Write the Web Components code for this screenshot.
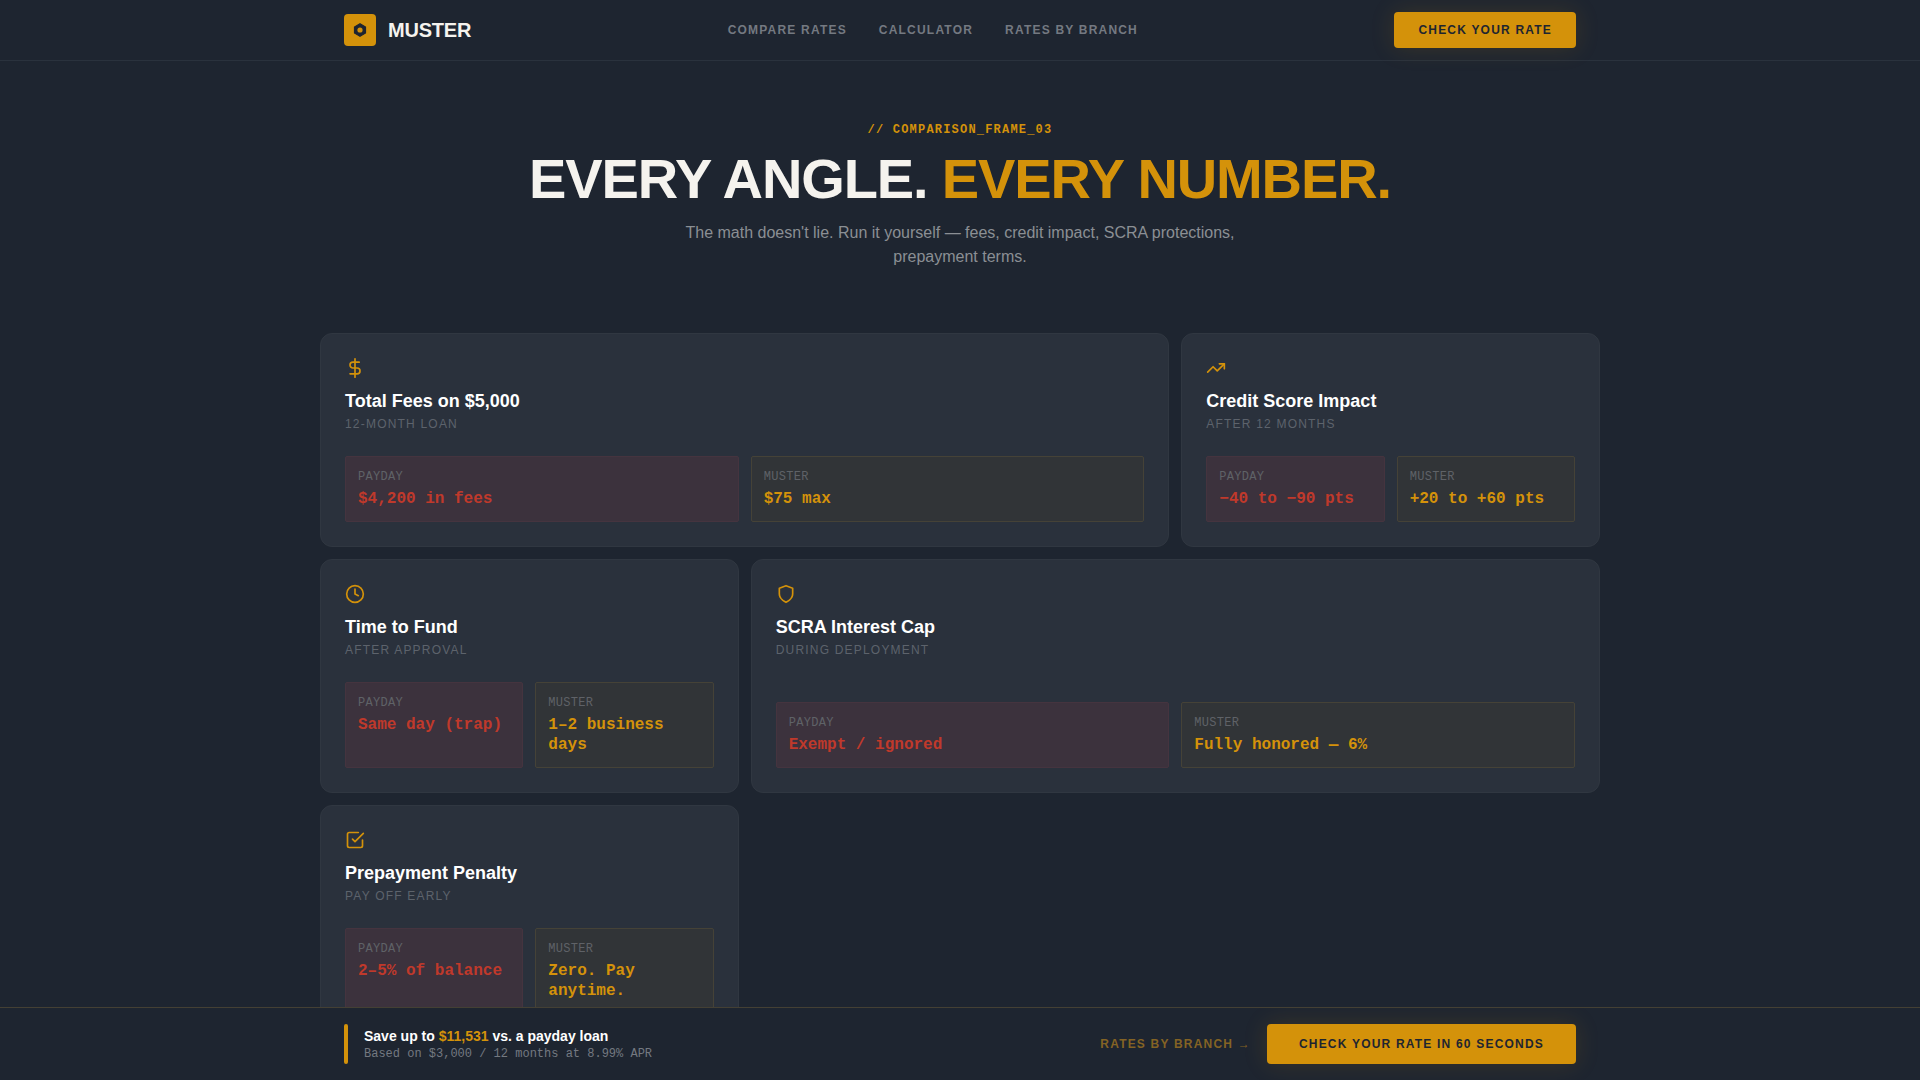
<!DOCTYPE html>
<html lang="en">
<head>
<meta charset="utf-8">
<meta name="viewport" content="width=device-width, initial-scale=1">
<title>Muster — Compare rates</title>
<style>
  :root {
    --bg: #1e2530;
    --card: #2a313c;
    --gold: #d4920a;
    --cream: #f5f3ee;
    --red: #c0392b;
    --sans: "Liberation Sans", Arial, sans-serif;
    --mono: "Liberation Mono", "Courier New", monospace;
  }
  * { box-sizing: border-box; }
  body { margin: 0; background: var(--bg); color: #fff; font-family: var(--sans); }
</style>
</head>
<body>
<muster-page></muster-page>

<script>
class BaseElement extends HTMLElement {
  constructor() {
    super();
    this.attachShadow({ mode: "open" });
  }
  connectedCallback() {
    this.shadowRoot.innerHTML = `<style>*{box-sizing:border-box}</style>` + this.render();
  }
}

customElements.define("muster-icon", class extends BaseElement {
  render() {
    const shapes = {
      dollar: `<line x1="12" y1="1" x2="12" y2="23"/><path d="M17 5H9.5a3.5 3.5 0 0 0 0 7h5a3.5 3.5 0 0 1 0 7H6"/>`,
      trend: `<polyline points="22 7 13.5 15.5 8.5 10.5 2 17"/><polyline points="16 7 22 7 22 13"/>`,
      clock: `<circle cx="12" cy="12" r="10"/><polyline points="12 6 12 12 16 14"/>`,
      shield: `<path d="M12 22s8-4 8-10V5l-8-3-8 3v7c0 6 8 10 8 10z"/>`,
      check: `<polyline points="9 11 12 14 22 4"/><path d="M21 12v7a2 2 0 0 1-2 2H5a2 2 0 0 1-2-2V5a2 2 0 0 1 2-2h11"/>`
    };
    return `<style>
      :host { display: block; width: 20px; height: 20px; color: var(--gold); }
      svg { display: block; width: 100%; height: 100%; }
    </style>
    <svg viewBox="0 0 24 24" fill="none" stroke="currentColor" stroke-width="2" stroke-linecap="round" stroke-linejoin="round" aria-hidden="true">${shapes[this.getAttribute("name")]}</svg>`;
  }
});

customElements.define("muster-button", class extends BaseElement {
  render() {
    return `<style>
      :host { display: block; }
      button {
        display: block; height: 36px; padding: 0 24px; border: 0; border-radius: 4px;
        background: var(--gold); color: var(--bg); cursor: pointer; white-space: nowrap;
        font: 700 12px/16px var(--sans); letter-spacing: 0.1em; text-transform: uppercase;
        box-shadow: 0 0 24px rgba(212, 146, 10, 0.15);
      }
      :host([size="large"]) button { height: 40px; padding: 0 32px; }
    </style>
    <button type="button"><slot></slot></button>`;
  }
});

customElements.define("muster-nav", class extends BaseElement {
  render() {
    return `<style>
      :host { display: block; border-bottom: 1px solid #2a323d; }
      header {
        display: flex; align-items: center; justify-content: space-between;
        max-width: 1280px; height: 60px; margin: 0 auto; padding: 0 24px;
      }
      .brand { display: flex; align-items: center; gap: 12px; color: var(--cream); text-decoration: none; font: 700 20px/28px var(--sans); letter-spacing: -0.01em; }
      .mark { display: flex; align-items: center; justify-content: center; width: 32px; height: 32px; border-radius: 4px; background: var(--gold); }
      .mark svg { display: block; width: 16px; height: 16px; }
      nav { display: flex; gap: 32px; }
      nav a { color: #747981; text-decoration: none; font: 700 12px/16px var(--sans); letter-spacing: 0.1em; text-transform: uppercase; }
    </style>
    <header>
      <a class="brand" href="#home"><span class="mark"><svg viewBox="0 0 16 16" aria-hidden="true"><path d="M8 1.7 13.5 4.9v6.2L8 14.3 2.5 11.1V4.9Z" fill="#1e2530" stroke="#1e2530" stroke-width="1.2" stroke-linejoin="round"/><circle cx="8" cy="8" r="2.6" fill="#d4920a"/></svg></span>MUSTER</a>
      <nav aria-label="Main"><a href="#compare">Compare Rates</a><a href="#calculator">Calculator</a><a href="#branch">Rates by Branch</a></nav>
      <muster-button>Check Your Rate</muster-button>
    </header>`;
  }
});

customElements.define("muster-hero", class extends BaseElement {
  render() {
    return `<style>
      :host { display: block; padding: 60px 24px 64px; text-align: center; }
      .eyebrow { margin: 0 0 10px; color: var(--gold); font: 700 12px/18px var(--mono); letter-spacing: 0.1em; text-transform: uppercase; }
      h1 { margin: 0 0 12px; color: var(--cream); font: 700 56px/60px var(--sans); letter-spacing: -0.02em; text-transform: uppercase; }
      em { color: var(--gold); font-style: normal; }
      .lead { max-width: 576px; margin: 0 auto; color: #8b8f94; font: 16px/24px var(--sans); }
    </style>
    <p class="eyebrow"><slot name="eyebrow"></slot></p>
    <h1>Every angle. <em>Every number.</em></h1>
    <p class="lead"><slot></slot></p>`;
  }
});

customElements.define("rate-value", class extends BaseElement {
  render() {
    return `<style>
      :host { display: block; min-width: 0; padding: 12px; border: 1px solid #45343f; border-radius: 2px; background: #3c323d; color: var(--red); }
      :host([kind="muster"]) { border-color: #454237; background: #313437; color: var(--gold); }
      dt { margin: 0 0 4px; color: #5f6267; font: 12px/16px var(--mono); letter-spacing: 0.025em; text-transform: uppercase; }
      dl, dd { margin: 0; }
      dd { font: 700 16px/20px var(--mono); }
    </style>
    <dl><dt>${this.getAttribute("kind")}</dt><dd><slot></slot></dd></dl>`;
  }
});

customElements.define("rate-card", class extends BaseElement {
  render() {
    return `<style>
      :host { display: flex; flex-direction: column; justify-content: space-between; gap: 24px; padding: 24px; border: 1px solid #303741; border-radius: 12px; background: var(--card); }
      :host([wide]) { grid-column: span 2; }
      h2 { margin: 12px 0 4px; color: #fff; font: 700 18px/22px var(--sans); }
      p { margin: 0; color: #5d636c; font: 12px/16px var(--sans); letter-spacing: 0.1em; text-transform: uppercase; }
      .values { display: grid; grid-template-columns: 1fr 1fr; gap: 12px; }
    </style>
    <div>
      <muster-icon name="${this.getAttribute("icon")}"></muster-icon>
      <h2>${this.getAttribute("heading")}</h2>
      <p>${this.getAttribute("note")}</p>
    </div>
    <div class="values"><slot></slot></div>`;
  }
});

customElements.define("rate-grid", class extends BaseElement {
  render() {
    return `<style>
      :host { display: grid; grid-template-columns: repeat(3, minmax(0, 1fr)); gap: 12px; max-width: 1280px; margin: 0 auto; padding-bottom: 128px; }
    </style><slot></slot>`;
  }
});

customElements.define("muster-bar", class extends BaseElement {
  render() {
    return `<style>
      :host { display: block; position: fixed; inset: auto 0 0 0; border-top: 1px solid #444034; background: var(--bg); overflow: hidden; }
      .inner { display: flex; align-items: center; justify-content: space-between; max-width: 1280px; margin: 0 auto; padding: 16px 24px; }
      .saving { display: flex; align-items: center; gap: 16px; }
      .rule { width: 4px; height: 40px; border-radius: 2px; background: var(--gold); }
      p { margin: 0; font: 700 14px/20px var(--sans); color: #fff; }
      p + p { font: 12px/16px var(--mono); color: #747981; }
      b { color: var(--gold); }
      .actions { display: flex; align-items: center; gap: 16px; }
      .actions a { color: #846324; text-decoration: none; font: 700 12px/16px var(--sans); letter-spacing: 0.1em; text-transform: uppercase; }
    </style>
    <div class="inner">
      <div class="saving"><span class="rule"></span><div>
        <p>Save up to <b>$11,531</b> vs. a payday loan</p>
        <p>Based on $3,000 / 12 months at 8.99% APR</p>
      </div></div>
      <div class="actions">
        <a href="#branch">Rates by Branch →</a>
        <muster-button size="large">Check Your Rate in 60 Seconds</muster-button>
      </div>
    </div>`;
  }
});

customElements.define("muster-page", class extends BaseElement {
  render() {
    return `<style>:host { display: block; }</style>
    <muster-nav></muster-nav>
    <main>
      <muster-hero><span slot="eyebrow">// Comparison_Frame_03</span>The math doesn't lie. Run it yourself — fees, credit impact, SCRA protections, prepayment terms.</muster-hero>
      <rate-grid>
        <rate-card wide icon="dollar" heading="Total Fees on $5,000" note="12-month loan"><rate-value kind="payday">$4,200 in fees</rate-value><rate-value kind="muster">$75 max</rate-value></rate-card>
        <rate-card icon="trend" heading="Credit Score Impact" note="After 12 months"><rate-value kind="payday">−40 to −90 pts</rate-value><rate-value kind="muster">+20 to +60 pts</rate-value></rate-card>
        <rate-card icon="clock" heading="Time to Fund" note="After approval"><rate-value kind="payday">Same day (trap)</rate-value><rate-value kind="muster">1–2 business days</rate-value></rate-card>
        <rate-card wide icon="shield" heading="SCRA Interest Cap" note="During deployment"><rate-value kind="payday">Exempt / ignored</rate-value><rate-value kind="muster">Fully honored — 6%</rate-value></rate-card>
        <rate-card icon="check" heading="Prepayment Penalty" note="Pay off early"><rate-value kind="payday">2–5% of balance</rate-value><rate-value kind="muster">Zero. Pay anytime.</rate-value></rate-card>
      </rate-grid>
    </main>
    <muster-bar></muster-bar>`;
  }
});
</script>
</body>
</html>
